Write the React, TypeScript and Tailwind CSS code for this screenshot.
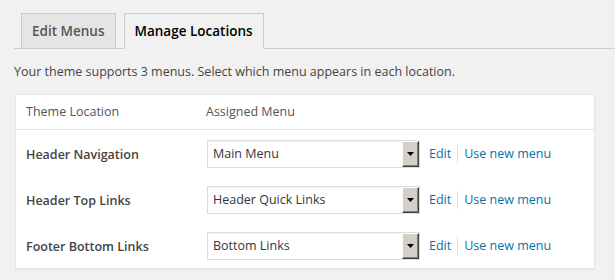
import React from "react";

const rows = [
  { location: "Header Navigation", menu: "Main Menu" },
  { location: "Header Top Links", menu: "Header Quick Links" },
  { location: "Footer Bottom Links", menu: "Bottom Links" },
];

function FakeSelect({ value }: { value: string }) {
  return (
    <div className="flex h-[28px] w-[213px] items-stretch border border-[#ddd] bg-white shadow-[inset_0_1px_2px_rgba(0,0,0,0.07)]">
      <span className="flex flex-1 items-center pl-[5px] text-[12.5px] text-[#32373c]">{value}</span>
      {/* classic windows style dropdown button */}
      <span className="flex w-[17px] items-center justify-center border border-t-white border-l-white border-r-[#404040] border-b-[#404040] bg-[#d4d0c8] shadow-[inset_-1px_-1px_0_#808080]">
        <svg width="7" height="4" viewBox="0 0 7 4">
          <path d="M0 0h7L3.5 4z" fill="#000" />
        </svg>
      </span>
    </div>
  );
}

export default function App() {
  return (
    <div className="min-h-[280px] w-[615px] bg-[#f1f1f1] font-['Open_Sans',sans-serif] text-[#444]">
      {/* Tabs */}
      <div className="ml-[14px] flex items-end gap-[8px] border-b border-[#ccc] pt-[13px] pl-[7px]">
        <span className="-mb-px border border-[#ccc] bg-[#e5e5e5] px-[10px] py-[5px] text-[13.5px] leading-[24px] font-semibold text-[#555]">
          Edit Menus
        </span>
        <span className="-mb-px border border-[#ccc] border-b-[#f1f1f1] bg-[#f1f1f1] px-[10px] py-[5px] text-[13.5px] leading-[24px] font-semibold text-black">
          Manage Locations
        </span>
      </div>

      <p className="ml-[14px] mt-[13px] text-[12.5px] leading-[19px]">
        Your theme supports 3 menus. Select which menu appears in each location.
      </p>

      {/* Locations table */}
      <div className="ml-[15px] mt-[13px] w-[580px] border border-[#e5e5e5] bg-white shadow-[0_1px_1px_rgba(0,0,0,0.04)]">
        <div className="flex h-[35px] items-center border-b border-[#e1e1e1] text-[12.5px] text-[#555]">
          <span className="w-[180px] pl-[10px]">Theme Location</span>
          <span className="pl-[10px]">Assigned Menu</span>
        </div>
        {rows.map((r) => (
          <div key={r.location} className="flex h-[46px] items-start pt-[10px]">
            <span className="flex h-[30px] w-[191px] items-center pl-[10px] text-[12.5px] font-semibold text-[#444]">
              {r.location}
            </span>
            <FakeSelect value={r.menu} />
            <span className="ml-[9px] flex h-[28px] items-center text-[12.5px] text-[#0073aa]">
              <a>Edit</a>
              <span className="mx-[6px] h-[18px] w-px bg-[#ddd]" />
              <a>Use new menu</a>
            </span>
          </div>
        ))}
      </div>
    </div>
  );
}
